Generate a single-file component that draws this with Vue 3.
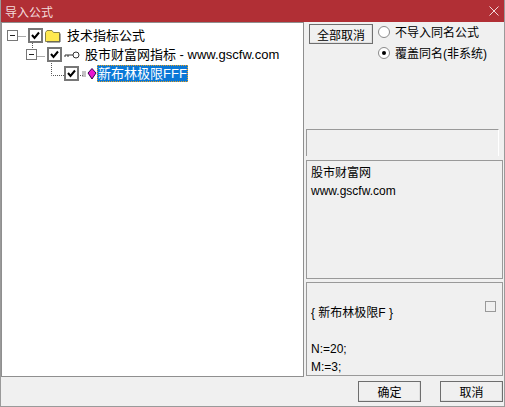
<script setup>
const rows = [
  { cls: 'r0', label: '技术指标公式', icon: 'folder', exp: true },
  { cls: 'r1', label: '股市财富网指标 - www.gscfw.com', icon: 'key', exp: true },
  { cls: 'r2', label: '新布林极限FFF', icon: 'gem', sel: true },
]
</script>

<template>
  <div class="win">
    <div class="title">
      <span class="title-text">导入公式</span>
      <svg class="close" width="10" height="10" viewBox="0 0 10 10"><path d="M0.5 0.5L9.5 9.5M9.5 0.5L0.5 9.5" stroke="#f1d9da" stroke-width="1" fill="none"/></svg>
    </div>
    <div class="main">
      <div class="tree">
        <svg class="lines" width="100" height="70">
          <path d="M14.5 13.5H24M30.5 20V26M33.5 33.5H43M49.5 40V52.5H62M81 52.5H77" stroke="#555" stroke-dasharray="1 1" fill="none"/>
        </svg>
        <div v-for="r in rows" :key="r.label" class="row" :class="r.cls">
          <span v-if="r.exp" class="exp"><i></i></span>
          <span class="chk">
            <svg width="9" height="9" viewBox="0 0 9 9"><path d="M1 4L3.5 7L8 1.5" stroke="#000" stroke-width="2" fill="none"/></svg>
          </span>
          <svg v-if="r.icon === 'folder'" class="ico" width="16" height="14" viewBox="0 0 16 14"><path d="M0.5 12.5V3.5L2 1.5H7L8.5 3.5H14.5V12.5Z" fill="#ffe94f" stroke="#8b8445"/><path d="M15 4.5V13H2" stroke="#555" fill="none"/></svg>
          <svg v-if="r.icon === 'key'" class="ico" width="16" height="10" viewBox="0 0 16 10"><circle cx="12" cy="5" r="3" fill="#fff" stroke="#333"/><path d="M9 5H1V7M4 5V7" stroke="#333" fill="none"/></svg>
          <svg v-if="r.icon === 'gem'" class="ico" width="16" height="14" viewBox="0 0 16 14"><path d="M1 5H5M1 7H5M1 9H5" stroke="#888" fill="none"/><path d="M11 1.5L15 6L11 12L7 6Z" fill="#e818d0" stroke="#33004d"/></svg>
          <span class="lbl" :class="{ sel: r.sel }">{{ r.label }}</span>
        </div>
      </div>
      <div class="side">
        <div class="top">
          <button class="btn all">全部取消</button>
          <div class="opts">
            <label class="opt"><span class="radio"></span>不导入同名公式</label>
            <label class="opt"><span class="radio on"></span>覆盖同名(非系统)</label>
          </div>
        </div>
        <div class="blank"></div>
        <div class="desc">
          <div>股市财富网</div>
          <div>www.gscfw.com</div>
        </div>
        <div class="code">
          <span class="mini"></span>
          <div>{ 新布林极限F }</div>
          <div>&nbsp;</div>
          <div>N:=20;</div>
          <div>M:=3;</div>
        </div>
      </div>
    </div>
    <div class="foot">
      <button class="btn act">确定</button>
      <button class="btn act">取消</button>
    </div>
  </div>
</template>

<style>
html, body { margin: 0; background: #f0f0f0; }
</style>

<style scoped>
.win {
  width: 505px; height: 407px; box-sizing: border-box;
  background: #f0f0f0; border: 1px solid #9a9a9a; border-top: 0;
  display: flex; flex-direction: column; overflow: hidden;
  font: 12px "Liberation Sans", "Noto Sans CJK SC", sans-serif; color: #000;
}
.title {
  height: 22px; margin: 0 -1px; background: #b12f35; color: #f3dcdd;
  display: flex; align-items: center; justify-content: space-between;
  padding: 0 6px 0 5px; flex: none; font-size: 12px;
}
.main { flex: none; height: 355px; display: flex; gap: 1px; }
.tree {
  position: relative; width: 303px; box-sizing: border-box; background: #fff;
  border: 1px solid #8f8f8f; padding-top: 3px;
}
.lines { position: absolute; left: 0; top: 0; }
.row { position: relative; height: 19px; display: flex; align-items: center; font-size: 13px; }
.r0 { padding-left: 5px; }
.r1 { padding-left: 24px; }
.r2 { padding-left: 62px; }
.exp {
  width: 9px; height: 9px; border: 1px solid #777; background: #fff; margin-right: 10px;
  display: flex; align-items: center; justify-content: center; flex: none;
}
.exp i { width: 5px; height: 1px; background: #222; }
.chk {
  width: 9px; height: 9px; padding: 1px; border: 2px solid #777; background: #fff; flex: none;
  display: flex; align-items: center; justify-content: center; box-sizing: content-box; margin-right: 2px;
}
.ico { flex: none; margin-right: 4px; }
.r0 .lbl { margin-left: 1px; }
.r2 .ico { margin-right: 0; }
.lbl { padding: 1px 1px; line-height: 15px; white-space: nowrap; }
.lbl.sel { background: #0a78d7; color: #fff; outline: 1px dotted #e8a020; outline-offset: -1px; }
.side { flex: 1; display: flex; flex-direction: column; padding-left: 1px; }
.top { height: 107px; display: flex; gap: 5px; padding: 2px 0 0 3px; box-sizing: border-box; }
.btn {
  font: 12px "Liberation Sans", "Noto Sans CJK SC", sans-serif; color: #000; padding: 0;
  background: #f0f0f0; border: 1px solid #6e6e6e; box-shadow: inset -1px -1px 0 #e0e0e0;
}
.all { width: 64px; height: 20px; flex: none; }
.opts { display: flex; flex-direction: column; gap: 6px; }
.opt { display: flex; align-items: center; gap: 5px; height: 15px; font-size: 12px; }
.radio {
  width: 10px; height: 10px; border-radius: 50%; background: #fff; border: 1px solid #8a8a8a;
  display: flex; align-items: center; justify-content: center; flex: none;
}
.radio.on::after { content: ""; width: 4px; height: 4px; border-radius: 50%; background: #000; }
.blank { height: 27px; width: 193px; box-sizing: border-box; border: 1px solid #999; border-bottom: 0; border-right-color: #fff; }
.desc {
  margin-top: 4px; height: 119px; width: 197px; box-sizing: border-box;
  border: 1px solid #999; padding: 3px 4px; line-height: 18px; font-size: 12px;
}
.code {
  position: relative; margin-top: 3px; height: 94px; width: 197px; box-sizing: border-box;
  border: 1px solid #999; padding: 21px 4px 0; line-height: 18px; font-size: 12px; overflow: hidden;
}
.mini { position: absolute; right: 6px; top: 18px; width: 9px; height: 9px; border: 1px solid #999; }
.foot { display: flex; justify-content: flex-end; gap: 19px; padding: 4px 0 0 0; }
.act { width: 63px; height: 21px; margin: 0; }
.act:last-child { margin-right: 1px; }
</style>
